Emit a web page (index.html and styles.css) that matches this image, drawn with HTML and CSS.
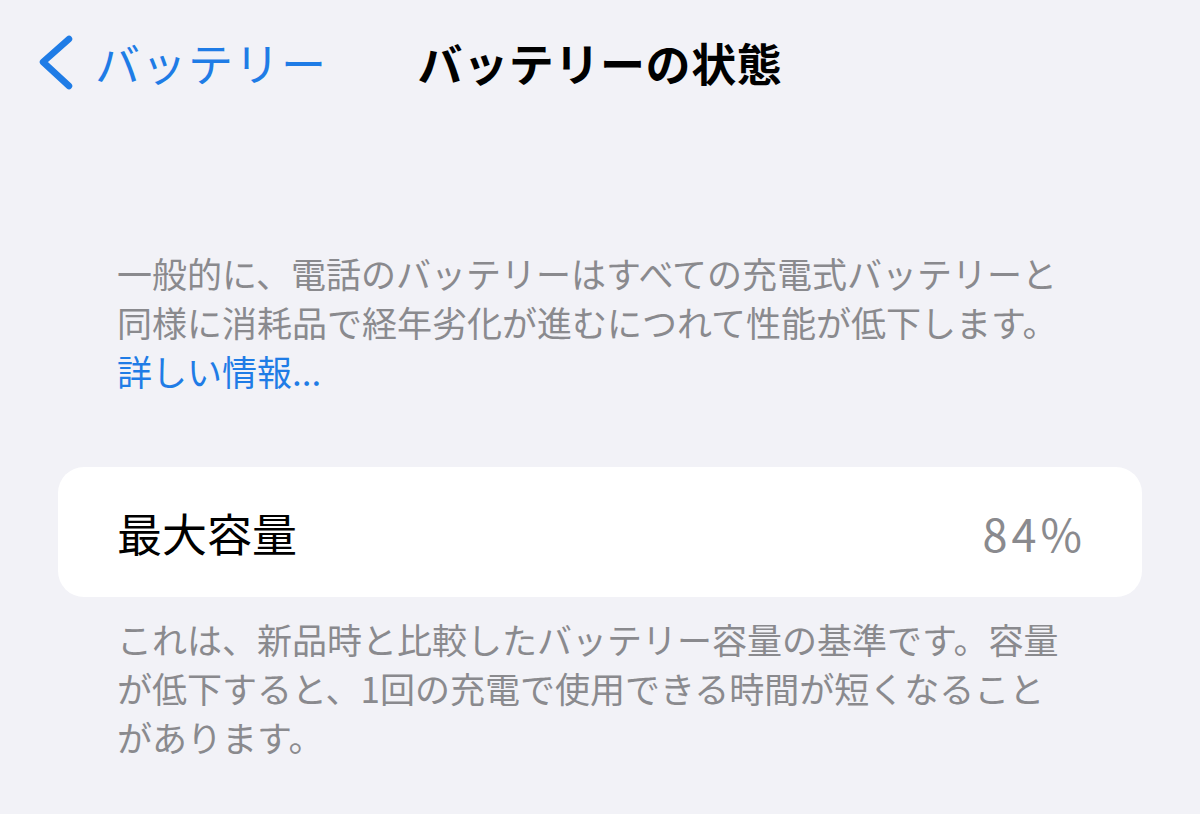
FILE: index.html
```html
<!DOCTYPE html>
<html lang="ja">
<head>
    <meta charset="UTF-8">
    <meta name="viewport" content="width=device-width, initial-scale=1.0">
    <title>バッテリーの状態</title>
    <link rel="stylesheet" href="styles.css">
</head>
<body>
    <header class="navbar">
        <a class="back" href="#">
            <svg class="chevron" width="36" height="56" viewBox="0 0 36 56">
                <path d="M31 4 L5 27 L31 51" fill="none" stroke="currentColor" stroke-width="6.5" stroke-linecap="round" stroke-linejoin="round"/>
            </svg>
            <span>バッテリー</span>
        </a>
        <h1 class="title">バッテリーの状態</h1>
        <div></div>
    </header>

    <p class="note intro">
        一般的に、電話のバッテリーはすべての充電式バッテリーと同様に消耗品で経年劣化が進むにつれて性能が低下します。
        <a class="link" href="#">詳しい情報...</a>
    </p>

    <div class="card">
        <div class="row-label">最大容量</div>
        <div class="row-value">84%</div>
    </div>

    <p class="note footer">これは、新品時と比較したバッテリー容量の基準です。容量が低下すると、1回の充電で使用できる時間が短くなることがあります。</p>
</body>
</html>
```

FILE: styles.css
```css
body {
    margin: 0;
    background-color: #f2f2f7;
    font-family: "Noto Sans CJK JP", "Noto Sans", sans-serif;
    color: #000;
}
.navbar {
    display: grid;
    grid-template-columns: 1fr auto 1fr;
    align-items: center;
    height: 126px;
    padding-left: 38px;
}
.back {
    display: flex;
    align-items: center;
    gap: 21px;
    color: #1f7ce6;
    text-decoration: none;
    font-size: 45px;
    line-height: 54px;
    letter-spacing: 1.5px;
}
.chevron {
    display: block;
}
.title {
    margin: 0;
    font-size: 45px;
    line-height: 54px;
    font-weight: 700;
    letter-spacing: 0.6px;
    margin-left: -38px;
}
.note {
    margin: 0 117px;
    max-width: 950px;
    font-size: 35px;
    line-height: 49px;
    color: #8a8a8e;
}
.intro {
    margin-top: 122px;
}
.link {
    display: block;
    color: #1f7ce6;
    text-decoration: none;
}
.card {
    margin: 72px 58px 0;
    height: 130px;
    padding: 0 56px 0 59px;
    background: #fff;
    border-radius: 26px;
    display: flex;
    justify-content: space-between;
    align-items: center;
    font-size: 45px;
}
.row-value {
    color: #8a8a8e;
    letter-spacing: 4px;
}
.footer {
    margin-top: 17px;
}
```
